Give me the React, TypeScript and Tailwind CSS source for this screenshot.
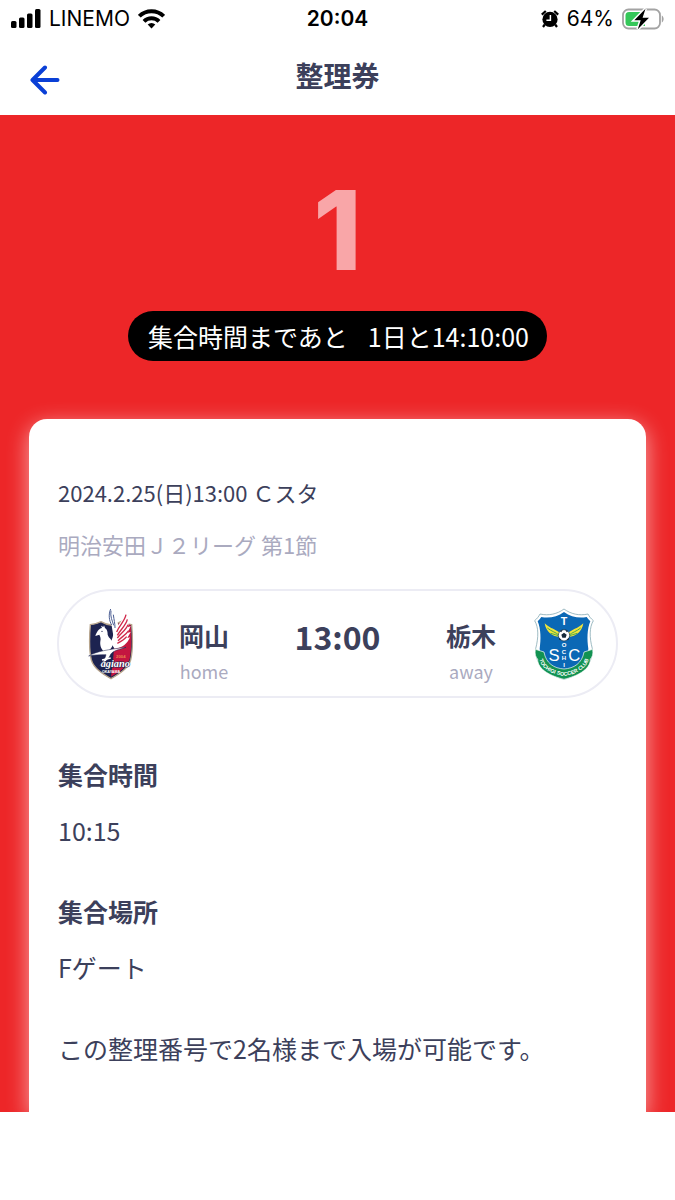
import type { ReactNode } from "react";

const SECTIONS = [
  { title: "集合時間", value: "10:15" },
  { title: "集合場所", value: "Fゲート" },
];

function StatusBar() {
  return (
    <div className="grid h-[38px] grid-cols-3 items-center px-[11px] font-['Inter',sans-serif] text-[21px] leading-6 text-black">
      <div className="flex items-center gap-2">
        <svg width="30" height="20" viewBox="0 0 30 20" aria-hidden="true">
          <rect x="0" y="12" width="5.5" height="7" rx="1.5" />
          <rect x="8" y="8.5" width="5.5" height="10.5" rx="1.5" />
          <rect x="16" y="4.5" width="5.5" height="14.5" rx="1.5" />
          <rect x="24" y="0" width="5.5" height="19" rx="1.5" />
        </svg>
        <span>LINEMO</span>
        <svg width="27" height="20" viewBox="0 0 27 20" fill="none" stroke="#000" strokeWidth="4" aria-hidden="true">
          <path d="M1.3 7.2a17.3 17.3 0 0 1 24.4 0" />
          <path d="M6 12.4a10.8 10.8 0 0 1 15 0" />
          <path d="M13.5 19.4l-3.8-3.8a5.4 5.4 0 0 1 7.6 0z" fill="#000" stroke="none" />
        </svg>
      </div>
      <div className="text-center font-semibold">20:04</div>
      <div className="flex items-center justify-end gap-2">
        <svg width="18" height="18" viewBox="0 0 18 18" aria-hidden="true">
          <circle cx="9" cy="9.4" r="7.6" />
          <path d="M0.8 4.6L4.8 1M17.2 4.6L13.2 1M3.8 14.5L2 17M14.2 14.5L16 17" stroke="#000" strokeWidth="2.2" />
          <path d="M9.4 5v5.2H5.4" fill="none" stroke="#fff" strokeWidth="1.5" />
        </svg>
        <span>64%</span>
        <svg width="42" height="22" viewBox="0 0 42 22" aria-hidden="true">
          <rect x="1" y="1.5" width="37" height="19" rx="5.5" fill="#fff" stroke="#a3a3a3" strokeWidth="1.8" />
          <path d="M39.8 7.5c2.4 1.2 2.4 5.8 0 7z" fill="#a3a3a3" />
          <path d="M7 4h16v14H7a3.5 3.5 0 0 1-3.5-3.5v-7A3.5 3.5 0 0 1 7 4z" fill="#35c759" />
          <path d="M23.5 0.8L12.3 12.2h6.4L15.8 21.2 27 9.8h-6.4z" fill="#000" stroke="#fff" strokeWidth="3" paintOrder="stroke" />
        </svg>
      </div>
    </div>
  );
}

function Header() {
  return (
    <header className="grid h-[77px] grid-cols-3 items-center px-[30px]">
      <button type="button" aria-label="戻る" className="mt-[6px] w-[30px]">
        <svg width="30" height="30" viewBox="0 0 30 30" fill="none" stroke="#0a3fd6" strokeWidth="4" strokeLinecap="round" strokeLinejoin="round">
          <path d="M27.5 15H3M15 2.5L2.5 15 15 27.5" />
        </svg>
      </button>
      <h1 className="pb-[3px] text-center text-[28px] leading-9 font-bold">整理券</h1>
    </header>
  );
}

function HomeEmblem() {
  return (
    <svg width="46" height="72" viewBox="2 6 138 216" role="img" aria-label="岡山">
      <path d="M9 56c12-1 22-4 32-9 10 6 20 9 30 10 12-1 22-5 31-11 10 6 20 9 31 10 3 36 4 76-3 106-8 26-34 42-59 56-25-14-51-30-59-56-7-30-6-70-3-106z" fill="#1d2350" stroke="#b8a58c" strokeWidth="4" />
      <path d="M84 57c7-2 13-5 18-9 9 5 18 8 28 9 3 36 3 74-3 102-7 24-31 39-56 53 8-50 10-100 13-155z" fill="#c41640" />
      {/* wings */}
      <path d="M71 9c-8 14-6 34 2 50l6 36 14-4c4-20 0-40-8-56-4-9-9-17-14-26z" fill="#fff" />
      <path d="M118 14c-4 18-16 30-26 44-8 12-14 22-16 36l-6 16 12 18c22-2 38-14 46-34l-8 2 10-18-9 2 9-20-8 4c4-18 4-34-4-50z" fill="#fff" />
      <path d="M70 9c-7 16-5 34 3 48M71 14c-3 18 4 30 8 44M78 26c2 16 5 26 5 40" fill="none" stroke="#4c5f94" strokeWidth="3" />
      <path d="M116 26c-4 20-20 32-28 52M120 40c-4 18-20 30-30 48M122 56c-6 16-20 24-32 40M124 74c-8 12-20 18-32 30M118 92c-8 10-16 14-28 20" fill="none" stroke="#d0294b" strokeWidth="4" />
      {/* head and body */}
      <path d="M44 66l-3-7 7 4 2-5 3 8c7 5 8 12 8 20 4 12 12 12 16 26-2 14-10 22-24 28-10-8-16-20-14-34 2-8 0-14-3-20l-12 4c4-12 10-22 20-24z" fill="#fff" />
      <circle cx="44" cy="76" r="2" fill="#1d2350" />
      {/* swoosh */}
      <path d="M4 150c22-14 62-20 112-26-20 7-38 9-46 21-6 14-14 23-34 35 12-14 18-24 20-34-18 0-36 0-52 4z" fill="#fff" stroke="#1d2350" strokeWidth="1.5" />
      <path d="M44 162l26-6" stroke="#fff" strokeWidth="5" />
      <text x="86" y="157" fill="#e8874d" fontFamily="Liberation Sans, sans-serif" fontSize="13" fontWeight="bold">2004</text>
      <text x="40" y="182" fill="#fff" stroke="#1d2350" strokeWidth="3" paintOrder="stroke" fontFamily="Liberation Serif, serif" fontSize="31" fontStyle="italic" fontWeight="bold">agiano</text>
      <text x="71" y="201" textAnchor="middle" fill="#fff" fontFamily="Liberation Sans, sans-serif" fontSize="11" fontWeight="bold">OKAYAMA</text>
    </svg>
  );
}

function AwayEmblem() {
  return (
    <svg width="60" height="72" viewBox="6 6 180 216" role="img" aria-label="栃木">
      <path d="M96 9C76 24 50 30 24 24 20 32 15 38 8 44c12 20 12 50 3 84-2 48 32 78 85 92 53-14 87-44 85-92-9-34-9-64 3-84-7-6-12-12-16-20-26 6-52 0-72-15z" fill="#fff" stroke="#6c98a5" strokeWidth="2" />
      <path d="M96 18c-20 14-44 20-68 15-3 5-7 9-11 13 10 24 10 54 6 82 2 42 30 66 73 78 43-12 71-36 73-78-4-28-4-58 6-82-4-4-8-8-11-13-24 5-48-1-68-15z" fill="#0b68b5" />
      <path d="M10 130l26 8c6 34 30 49 60 51 30-2 54-17 60-51l26-8c2 16-1 22-7 30 0 32-42 51-79 60-37-9-79-28-79-60-6-8-9-14-7-30z" fill="#129252" stroke="#fff" strokeWidth="2" />
      <path d="M86 92C62 94 42 78 38 52c14 14 26 16 36 22 10 5 14 10 16 14zM106 92c24 2 44-14 48-40-14 14-26 16-36 22-10 5-14 10-16 14z" fill="#f2e53a" />
      <path d="M46 66c12 10 24 12 36 22M56 82c10 4 18 4 28 8M146 66c-12 10-24 12-36 22M136 82c-10 4-18 4-28 8" fill="none" stroke="#4aa850" strokeWidth="3" />
      <circle cx="96" cy="88" r="17" fill="#fff" stroke="#1c3547" strokeWidth="2" />
      <path d="M96 80l8 6-3 9H91l-3-9zM83 75l9-4-4 8zM109 75l-9-4 4 8zM82 95l7 7-8-1zM110 95l-7 7 8-1z" fill="#172939" />
      <g fill="#fff" fontFamily="Liberation Sans, sans-serif" textAnchor="middle">
        <text x="96" y="58" fontSize="32" fontWeight="bold">T</text>
        <text x="66" y="164" fontSize="50">S</text>
        <text x="127" y="164" fontSize="50">C</text>
        <g fontSize="18" fontWeight="bold">
          <text x="96" y="123">O</text>
          <text x="96" y="143">C</text>
          <text x="96" y="163">H</text>
          <text x="96" y="183">I</text>
        </g>
      </g>
      <path id="ribbon" d="M20 154c6 32 36 50 76 56 40-6 70-24 76-56" fill="none" />
      <text fill="#fff" fontFamily="Liberation Sans, sans-serif" fontSize="16" fontWeight="bold">
        <textPath href="#ribbon" startOffset="50%" textAnchor="middle">TOCHIGI SOCCER CLUB</textPath>
      </text>
    </svg>
  );
}

function Team({ name, side }: { name: string; side: string }) {
  return (
    <div className="pt-[18px] text-center">
      <p className="text-[25px] leading-9 font-bold">{name}</p>
      <p className="text-[18px] leading-9 text-[#aaaabf]">{side}</p>
    </div>
  );
}

function Emblem({ children }: { children: ReactNode }) {
  return <div className="flex w-[60px] items-center justify-center">{children}</div>;
}

export default function App() {
  return (
    <div className="min-h-screen bg-white font-['Noto_Sans_CJK_JP',sans-serif] text-[#3c405b]">
      <StatusBar />
      <Header />

      <main className="overflow-hidden bg-[#ed2628] px-[29px] pt-[60px]">
        <p className="text-center font-['Inter',sans-serif] text-[110px] leading-[110px] font-extrabold text-[#f9a6a8]">
          1
        </p>
        <div className="mx-auto mt-[26px] flex h-[50px] w-fit items-center gap-5 rounded-full bg-black pr-[18px] pl-5 text-[25px] leading-9 text-white">
          <span>集合時間まであと</span>
          <span>1日と14:10:00</span>
        </div>

        <section className="mt-[58px] rounded-t-[18px] bg-white px-7 pt-[55px] pb-[46px] shadow-[0_6px_22px_rgba(255,255,255,0.6)]">
          <p className="pl-px text-[22px] leading-9">2024.2.25(日)13:00 Ｃスタ</p>
          <p className="mt-4 pl-px text-[22px] leading-9 text-[#aaaabf]">明治安田Ｊ２リーグ 第1節</p>

          <div className="mt-[27px] flex h-[109px] items-center justify-between rounded-full border-2 border-[#ececf4] px-[22px]">
            <div className="flex items-center gap-[38px]">
              <Emblem>
                <HomeEmblem />
              </Emblem>
              <Team name="岡山" side="home" />
            </div>
            <p className="mb-4 text-[32px] leading-9 font-bold">13:00</p>
            <div className="flex items-center gap-[38px]">
              <Team name="栃木" side="away" />
              <Emblem>
                <AwayEmblem />
              </Emblem>
            </div>
          </div>

          <div className="mt-[58px] flex flex-col gap-[45px] pl-px text-[25px] leading-9">
            {SECTIONS.map((section) => (
              <div key={section.title}>
                <h2 className="font-bold">{section.title}</h2>
                <p className="mt-5">{section.value}</p>
              </div>
            ))}
            <p>この整理番号で2名様まで入場が可能です。</p>
          </div>
        </section>
      </main>
    </div>
  );
}
